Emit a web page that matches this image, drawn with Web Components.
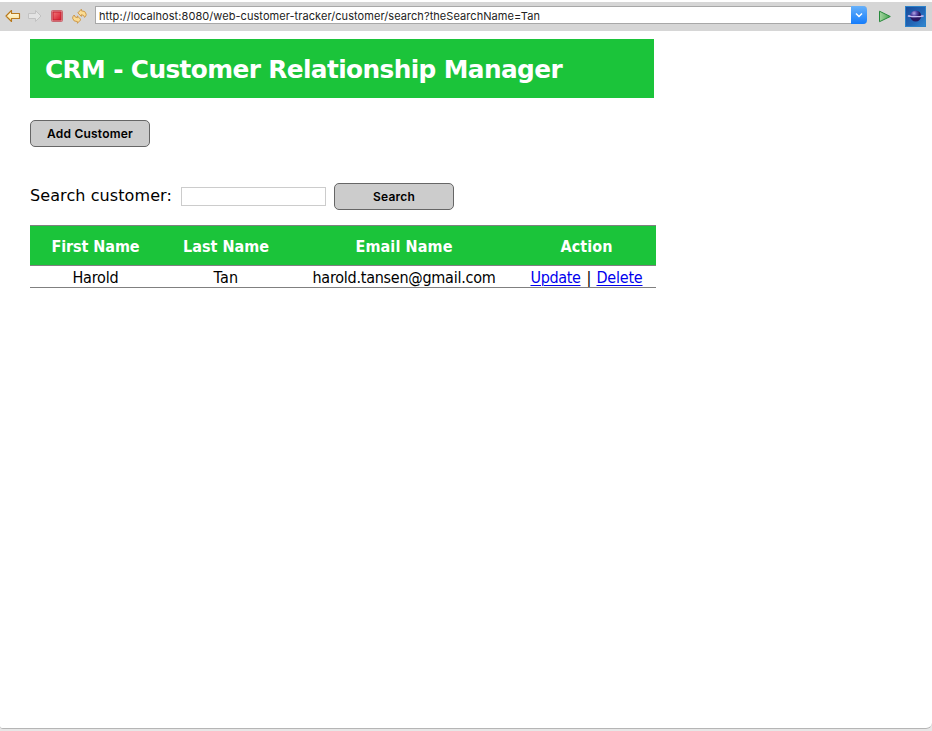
<!DOCTYPE html>
<html lang="en"><head><meta charset="utf-8"><title>CRM</title>
<style>
html,body{margin:0;height:100%}
body{font-family:"DejaVu Sans",sans-serif;font-size:16px;color:#000;background:#fff;overflow:hidden}
</style></head><body>
<app-window></app-window>
<script>
const define=(name,html,after)=>customElements.define(name,class extends HTMLElement{
  constructor(){super();this.attachShadow({mode:'open'}).innerHTML=html;}
  connectedCallback(){if(after)after(this);}
});

// One line of text, tracked so that it fills the width given in pixels.
define('fit-text','<style>:host{display:inline-block;white-space:nowrap}span{display:inline-block;white-space:nowrap;text-decoration:var(--line,none);text-underline-offset:2px}</style><span><slot></slot></span>',el=>{
  requestAnimationFrame(()=>{
    const w=+el.getAttribute('w'),s=el.shadowRoot.querySelector('span'),n=el.textContent.length;
    const natural=s.getBoundingClientRect().width;
    s.style.letterSpacing=((w-natural)/n)+'px';
  });
});

define('address-bar',`<style>
:host{display:flex;align-items:center;flex:none;width:772px;height:18px;box-sizing:border-box;background:#fff;border:1px solid #a8a8a8;border-right:0;font:11px/16px Inter,sans-serif;color:#222;padding-left:3px;border-radius:0 4px 4px 0}
.text{flex:1;padding-top:1px}
svg{flex:none;display:block;margin:-1px 0}
</style><div class="text"><slot></slot></div>
<svg width="16" height="18" viewBox="0 0 16 18"><defs><linearGradient id="b" x2="0" y2="1"><stop stop-color="#67b1fa"/><stop offset="1" stop-color="#147cfb"/></linearGradient></defs><path d="M0 0H12Q16 0 16 4V14Q16 18 12 18H0Z" fill="url(#b)"/><path d="M5 7.5 8 10.5 11 7.5" fill="none" stroke="#fff" stroke-width="1.5"/></svg>`);

define('tool-bar',`<style>
:host{display:flex;box-sizing:border-box;height:31px;padding-top:2px;background:#fff;flex:none}
.bar{display:flex;flex:1;background:#d6d6d6;align-items:center}
svg{display:block;flex:none}
address-bar{margin:-3px 0 0 1px}
</style><div class="bar">
<svg width="94" height="29" viewBox="0 2 94 29">
<defs><linearGradient id="y" x2="0" y2="1"><stop stop-color="#fffef2"/><stop offset="1" stop-color="#fbe08e"/></linearGradient><linearGradient id="r" x2="1" y2="1"><stop stop-color="#f17879"/><stop offset="1" stop-color="#d5172b"/></linearGradient></defs>
<path d="M6 16 11.5 10.5V13.5H19.5V18.5H11.5V21.5Z" fill="url(#y)" stroke="#b9791c" stroke-width="1.15" stroke-linejoin="round"/>
<path d="M41 16 35.5 10.5V13.5H28.5V18.5H35.5V21.5Z" fill="#e3e3e3" stroke="#c2c2c2" stroke-linejoin="round"/>
<rect x="51.5" y="10.5" width="11" height="11" rx="1" fill="#e4a4a8" stroke="#c86970"/><rect x="53" y="12" width="8" height="8" fill="url(#r)" stroke="#c51c2d"/>
<g fill="#fbdc93" stroke="#c8913f" stroke-width=".9" stroke-linejoin="round">
<path d="M77.8 12.9 81.4 9.2V10.8Q85.6 10.6 86.2 14.2 86.2 16 84.6 17.4 84.3 14.9 81.4 14.7V16.4Z"/>
<path d="M81 19.6 77.4 23.2V21.6Q73.2 21.8 72.6 18.2 72.6 16.4 74.2 15 74.5 17.5 77.4 17.7V16Z"/></g></svg>
<address-bar><fit-text w="441">http://localhost:8080/web-customer-tracker/customer/search?theSearchName=Tan</fit-text></address-bar>
<svg width="65" height="29" viewBox="867 2 65 29">
<defs><linearGradient id="g" x2="1"><stop stop-color="#a4d5a0"/><stop offset="1" stop-color="#48a352"/></linearGradient><linearGradient id="bg" x2="1" y2="1"><stop stop-color="#174a99"/><stop offset=".6" stop-color="#2468b8"/><stop offset="1" stop-color="#3389d1"/></linearGradient><radialGradient id="o" cx=".35" cy=".25"><stop stop-color="#b4a9e4"/><stop offset=".5" stop-color="#594bab"/><stop offset="1" stop-color="#29175f"/></radialGradient></defs>
<path d="M879.5 11.2V21.7L890.3 16.5Z" fill="url(#g)" stroke="#27893b" stroke-linejoin="round"/>
<rect x="905.5" y="6.5" width="20" height="20" fill="url(#bg)" stroke="#2b82c9"/>
<ellipse cx="915.7" cy="16" rx="8.3" ry="1.4" fill="#8f8ed8"/>
<circle cx="915.7" cy="16" r="5.5" fill="url(#o)"/><path d="M908 15.8Q916 17.6 923.5 15.8" fill="none" stroke="#c5bdf0" stroke-width="1.3"/>
</svg></div>`);

define('page-header',`<style>:host{display:flex;align-items:center;box-sizing:border-box;width:624px;height:59px;padding:2px 15px 0;background:#1bc43a;color:#fff;font-size:24.8px;font-weight:bold}</style><slot></slot>`);

define('push-button',`<style>:host{display:block}button{display:flex;justify-content:center;align-items:center;box-sizing:border-box;width:120px;height:27px;padding:0;border:1px solid #666;border-radius:5px;background:#ccc;color:#000;font:600 12px Inter,sans-serif}</style><button><slot></slot></button>`);

define('search-form',`<style>
:host{display:flex;align-items:center;height:27px}
.label{width:151px;margin-top:-3px}
input{box-sizing:border-box;width:145px;height:19px;border:1px solid #ccc;margin:0 8px 0 0;padding:0;background:#fff}
</style><div class="label"><fit-text w="142">Search customer:</fit-text></div><input aria-label="Search customer"><push-button><fit-text w="42">Search</fit-text></push-button>`);

define('customer-table',`<style>
:host{display:block;width:626px;font:16px "DejaVu Sans Condensed","DejaVu Sans",sans-serif;font-stretch:condensed}
.row{display:grid;grid-template-columns:131px 130px 226px 139px;align-items:center;justify-items:center;box-sizing:border-box}
.head{height:41px;background:#1bc43a;color:#fff;font-weight:bold;border:solid #808080;border-width:1px 0;padding-top:2px}
.body{height:22px;padding-top:2px;border-bottom:1px solid #808080}
a{color:#00e;text-decoration:none;--line:underline 1px}
.act{display:flex;gap:6px}
</style>
<div class="row head"><fit-text w="88">First Name</fit-text><fit-text w="86">Last Name</fit-text><fit-text w="97">Email Name</fit-text><fit-text w="52">Action</fit-text></div>
<div class="row body"><fit-text w="46">Harold</fit-text><fit-text w="25">Tan</fit-text><fit-text w="183">harold.tansen@gmail.com</fit-text><div class="act"><a href="#"><fit-text w="50">Update</fit-text></a><fit-text w="4">|</fit-text><a href="#"><fit-text w="46">Delete</fit-text></a></div></div>`);

define('app-window',`<style>
:host{display:flex;flex-direction:column;height:731px;background:#e7e7e7}
.frame{display:flex;flex-direction:column;height:729px;box-sizing:border-box;background:#fff;border-bottom:1px solid #b5b5b5;border-radius:0 0 6px 3px;overflow:hidden}
main{display:flex;flex-direction:column;align-items:flex-start;padding:8px 0 0 30px}
.add{margin-top:22px}search-form{margin-top:36px}customer-table{margin-top:15px}
</style><div class="frame"><tool-bar></tool-bar><main><page-header><fit-text w="517">CRM - Customer Relationship Manager</fit-text></page-header>
<push-button class="add"><fit-text w="86">Add Customer</fit-text></push-button><search-form></search-form><customer-table></customer-table></main></div>`);
</script></body></html>
